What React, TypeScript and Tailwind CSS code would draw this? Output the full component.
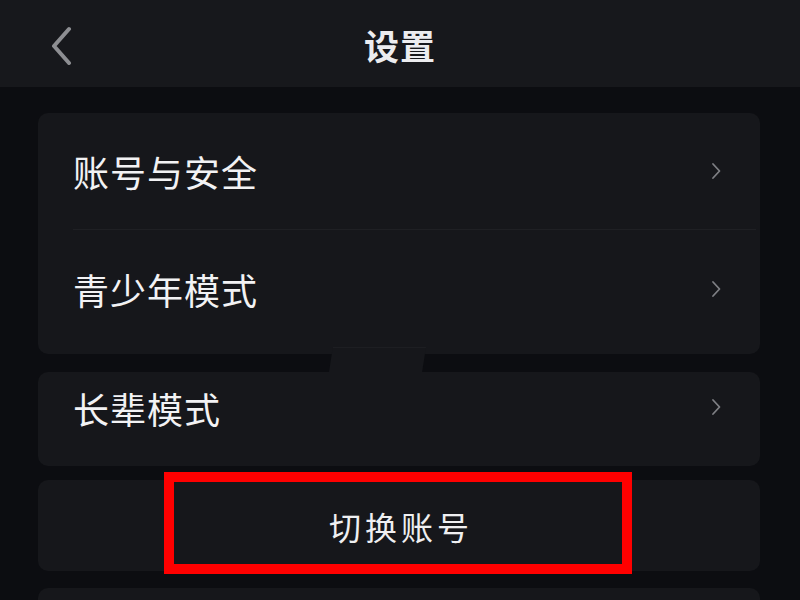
import React from "react";

const Chevron = () => (
  <svg width="12" height="18" viewBox="0 0 12 18" fill="none" className="shrink-0">
    <path d="M3 2 L9.5 9 L3 16" stroke="#7e7f84" strokeWidth="1.8" strokeLinecap="round" strokeLinejoin="round" />
  </svg>
);

const font = { fontFamily: '"Noto Sans CJK SC", "Noto Sans", sans-serif' };

export default function App() {
  return (
    <div className="w-[800px] h-[600px] overflow-hidden bg-[#0c0d11] text-[#f2f2f4]" style={font}>
      <header className="h-[87px] bg-[#17181c] relative flex items-center justify-center">
        <div className="absolute left-[48px] top-[25px]">
          <svg width="26" height="40" viewBox="0 0 26 40" fill="none">
            <path d="M21 4 L6 21 L21 38" stroke="#8d8e92" strokeWidth="4" strokeLinecap="round" strokeLinejoin="round" />
          </svg>
        </div>
        <h1 className="text-[35px] font-bold leading-none tracking-[1px] text-[#ececef] mt-[2px]">设置</h1>
      </header>

      <main className="pt-[26px] pl-[38px] pr-[40px] flex flex-col relative">
        <section className="bg-[#16171b] rounded-[10px] h-[241px] flex flex-col">
          <div className="h-[116px] flex items-center justify-between pl-[35px] pr-[38px]">
            <span className="text-[36px] leading-none tracking-[1px]">账号与安全</span>
            <Chevron />
          </div>
          <div className="ml-[35px] mr-[4px] h-px bg-[#1f2024]" />
          <div className="flex-1 flex items-center justify-between pl-[35px] pr-[38px] pb-[6px]">
            <span className="text-[36px] leading-none tracking-[1px]">青少年模式</span>
            <Chevron />
          </div>
        </section>

        <div
          className="absolute left-[329px] top-[260px] w-[97px] h-[25px] bg-[#16171b] border-t border-[#1d1e22]"
          style={{ clipPath: "polygon(4% 0, 100% 0, 96% 100%, 0 100%)" }}
        />

        <section className="mt-[18px] bg-[#16171b] rounded-[10px] h-[94px] flex items-start justify-between pl-[35px] pr-[38px] pt-[18px]">
          <span className="text-[36px] leading-none tracking-[1px]">长辈模式</span>
          <div className="mt-[8px]">
            <Chevron />
          </div>
        </section>

        <section className="mt-[14px] bg-[#16171b] rounded-[10px] h-[91px] flex items-center justify-center relative">
          <span className="text-[32px] leading-none tracking-[4px] pl-[4px] text-[#efeff1]">切换账号</span>
          <div className="absolute left-[126px] top-[-8px] w-[468px] h-[102px] border-[10px] border-[#ff0000]" />
        </section>

        <section className="mt-[17px] bg-[#16171b] rounded-[10px] h-[60px]" />
      </main>
    </div>
  );
}
